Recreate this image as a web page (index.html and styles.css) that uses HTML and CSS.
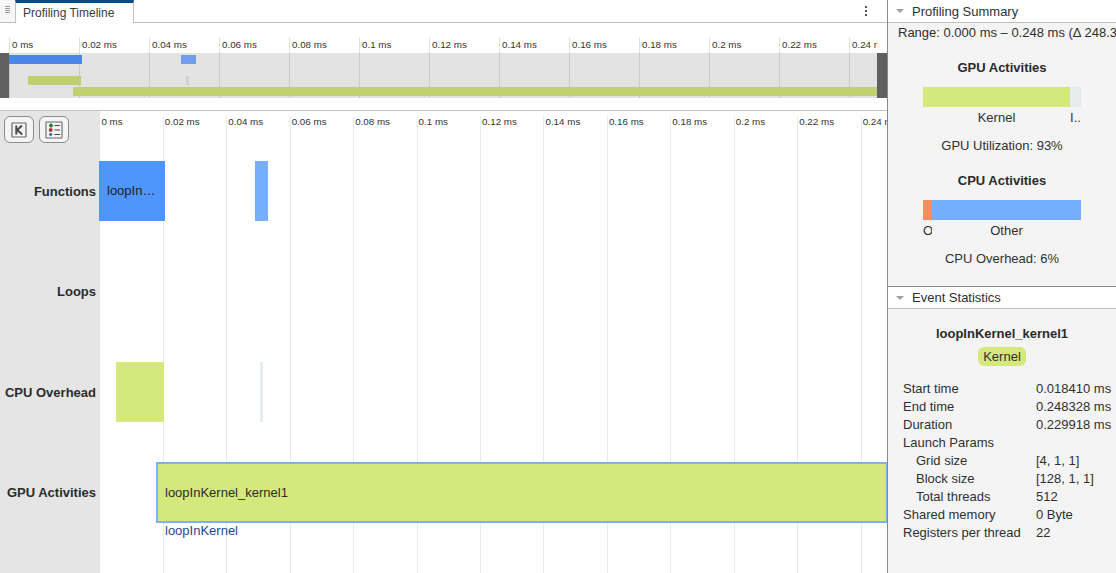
FILE: index.html
```html
<!DOCTYPE html>
<html lang="en">
<head>
<meta charset="utf-8">
<title>Profiling Timeline</title>
<link rel="stylesheet" href="styles.css">
</head>
<body>
<div class="app">
  <section class="left">
    <div class="tabbar">
      <div class="grip"><i></i><i></i><i></i><i></i></div>
      <div class="tab">Profiling Timeline</div>
      <div class="spacer"></div>
      <div class="kebab"><i></i><i></i><i></i></div>
    </div>
    <div class="overview">
      <div class="ov-ruler">
        <span class="ov-tick">0 ms</span><span class="ov-tick">0.02 ms</span><span class="ov-tick">0.04 ms</span><span class="ov-tick">0.06 ms</span><span class="ov-tick">0.08 ms</span><span class="ov-tick">0.1 ms</span><span class="ov-tick">0.12 ms</span><span class="ov-tick">0.14 ms</span><span class="ov-tick">0.16 ms</span><span class="ov-tick">0.18 ms</span><span class="ov-tick">0.2 ms</span><span class="ov-tick">0.22 ms</span><span class="ov-tick">0.24 ms</span>
      </div>
      <div class="ov-band">
        <div class="ov-lines"><i></i><i></i><i></i><i></i><i></i><i></i><i></i><i></i><i></i><i></i><i></i><i></i><i></i></div>
        <div class="ov-bar ov-f1"></div>
        <div class="ov-bar ov-f2"></div>
        <div class="ov-bar ov-c1"></div>
        <div class="ov-bar ov-c2"></div>
        <div class="ov-bar ov-g1"></div>
        <div class="handle handle-l"></div>
        <div class="handle handle-r"></div>
      </div>
    </div>
    <div class="main">
      <aside class="labels">
        <div class="tools">
          <button class="tool" type="button">
            <svg width="16" height="16" viewBox="0 0 16 16"><rect x="1" y="1" width="14" height="14" rx="0.5" fill="#f5f5f5" stroke="#666" stroke-width="1.2"/><path d="M5.3 3.5v9M11 3.5L6.2 8l5 4.5" fill="none" stroke="#4a4a4a" stroke-width="2"/></svg>
          </button>
          <button class="tool" type="button">
            <svg width="18" height="18" viewBox="0 0 18 18"><rect x="1" y="1" width="16" height="16" rx="0.5" fill="#f5f5f5" stroke="#666" stroke-width="1.1"/><path d="M4 4.5h4M6 2.5v4" stroke="#14802c" stroke-width="1.8"/><rect x="4" y="7.4" width="3.4" height="3.2" fill="#b02a2a"/><path d="M5.7 11.4l2 2-2 2-2-2z" fill="#2b6cc4"/><path d="M9.5 4.5h5.5M9.5 9h5.5M9.5 13.5h5.5" stroke="#444" stroke-width="1"/></svg>
          </button>
        </div>
        <div class="row-label lab-f">Functions</div>
        <div class="row-label lab-l">Loops</div>
        <div class="row-label lab-c">CPU Overhead</div>
        <div class="row-label lab-g">GPU Activities</div>
      </aside>
      <div class="canvas">
        <div class="m-cols">
          <span class="m-tick">0 ms</span><span class="m-tick">0.02 ms</span><span class="m-tick">0.04 ms</span><span class="m-tick">0.06 ms</span><span class="m-tick">0.08 ms</span><span class="m-tick">0.1 ms</span><span class="m-tick">0.12 ms</span><span class="m-tick">0.14 ms</span><span class="m-tick">0.16 ms</span><span class="m-tick">0.18 ms</span><span class="m-tick">0.2 ms</span><span class="m-tick">0.22 ms</span><span class="m-tick">0.24 ms</span>
        </div>
        <div class="bar bar-f1">loopIn…</div>
        <div class="bar bar-f2"></div>
        <div class="bar bar-c1"></div>
        <div class="bar bar-c2"></div>
        <div class="bar bar-g1">loopInKernel_kernel1</div>
        <div class="bar-sub">loopInKernel</div>
      </div>
    </div>
  </section>
  <section class="right">
    <header class="sec-head sec-first"><span class="tri"></span>Profiling Summary</header>
    <div class="summary">
      <div class="range">Range: 0.000 ms – 0.248 ms (Δ 248.328 µs)</div>
      <h3 class="chart-title gpu-title">GPU Activities</h3>
      <div class="stack"><span class="seg seg-kernel"></span><span class="seg seg-idle"></span></div>
      <div class="stack-labels"><span class="sl sl-kernel">Kernel</span><span class="sl sl-idle">I..</span></div>
      <div class="metric">GPU Utilization: 93%</div>
      <h3 class="chart-title cpu-title">CPU Activities</h3>
      <div class="stack"><span class="seg seg-over"></span><span class="seg seg-other"></span></div>
      <div class="stack-labels"><span class="sl sl-over">O</span><span class="sl sl-other">Other</span></div>
      <div class="metric">CPU Overhead: 6%</div>
    </div>
    <header class="sec-head sec-second"><span class="tri"></span>Event Statistics</header>
    <div class="stats">
      <div class="ev-name">loopInKernel_kernel1</div>
      <div class="pill-row"><span class="pill">Kernel</span></div>
      <dl class="kv">
        <dt>Start time</dt><dd>0.018410 ms</dd>
        <dt>End time</dt><dd>0.248328 ms</dd>
        <dt>Duration</dt><dd>0.229918 ms</dd>
        <dt>Launch Params</dt><dd></dd>
        <dt class="ind">Grid size</dt><dd>[4, 1, 1]</dd>
        <dt class="ind">Block size</dt><dd>[128, 1, 1]</dd>
        <dt class="ind">Total threads</dt><dd>512</dd>
        <dt>Shared memory</dt><dd>0 Byte</dd>
        <dt>Registers per thread</dt><dd>22</dd>
      </dl>
    </div>
  </section>
</div>
</body>
</html>
```
FILE: styles.css
```css
* { box-sizing: border-box; }
html, body { margin: 0; height: 100%; overflow: hidden; background: #fff; }
body { font-family: "Liberation Sans", Arial, sans-serif; color: #212121; font-size: 13px; }
.app { display: flex; width: 1116px; height: 573px; }

.left { width: 887px; display: flex; flex-direction: column; overflow: hidden; }
.right { width: 229px; border-left: 1px solid #8a8a8a; background: #f4f4f4; display: flex; flex-direction: column; overflow: hidden; }

.tabbar { height: 23px; display: flex; align-items: stretch; border-bottom: 1px solid #bfbfbf; }
.grip { width: 15px; display: flex; flex-direction: column; gap: 1px; padding: 6px 5px 0; background: #f7f7f7; border-bottom: 1px solid #bfbfbf; height: 23px; }
.grip i { display: block; height: 1px; background: #999; }
.tab { width: 119px; height: 23px; border-top: 3px solid #004b87; border-left: 1px solid #bfbfbf; border-right: 1px solid #bfbfbf; background: #fff; padding: 3px 0 0 7px; font-size: 12px; color: #3c3c3c; white-space: nowrap; }
.spacer { flex: 1; }
.kebab { width: 42px; display: flex; flex-direction: column; align-items: center; gap: 2px; padding: 6px 0 0 0; }
.kebab i { width: 2px; height: 2px; background: #555; }

.overview { height: 88px; border-bottom: 1px solid #c4c4c4; }
.ov-ruler { display: flex; width: 877px; padding: 14px 0 0 9px; height: 30px; overflow: hidden; }
.ov-tick { flex: 0 0 70px; height: 16px; padding: 0 0 0 2px; border-left: 1px solid #e2e2e2; font-size: 9.8px; line-height: 15px; color: #333; white-space: nowrap; }
.ov-band { position: relative; height: 45px; background: #e3e3e3; }
.ov-lines { display: flex; padding-left: 9px; height: 100%; }
.ov-lines i { flex: 0 0 70px; border-left: 1px solid #cdcdcd; }
.handle { position: absolute; top: 0; bottom: 0; background: #606060; }
.handle-l { left: 0; width: 9px; }
.handle-r { left: 877px; width: 10px; }
.ov-bar { position: absolute; }
.ov-f1 { left: 9px; top: 2px; width: 73px; height: 9px; background: #4a86e8; }
.ov-f2 { left: 181px; top: 2px; width: 15px; height: 9px; background: #6f9fe8; }
.ov-c1 { left: 28px; top: 23px; width: 53px; height: 9px; background: #c0d070; }
.ov-c2 { left: 186px; top: 23px; width: 3px; height: 9px; background: #cdd3d6; }
.ov-g1 { left: 73px; top: 34px; width: 804px; height: 9px; background: #c0d070; }

.main { flex: 1; display: flex; min-height: 0; }
.labels { width: 99px; background: #e5e5e5; position: relative; flex: none; }
.tools { display: flex; gap: 5px; padding: 5px 0 0 4px; }
.tool { width: 30px; height: 27px; padding: 0; display: flex; align-items: center; justify-content: center; background: #f4f4f4; border: 1px solid #8c8c8c; border-radius: 6px; }
.row-label { position: absolute; right: 3px; font-size: 13px; line-height: 16px; font-weight: bold; color: #2b2b2b; white-space: nowrap; }
.lab-f { top: 73px; }
.lab-l { top: 173px; }
.lab-c { top: 274px; }
.lab-g { top: 374px; }

.canvas { flex: 1; position: relative; overflow: hidden; background: linear-gradient(#e5e5e5, #e5e5e5) 0 0 / 1px 100% no-repeat, #fff; }
.m-cols { display: flex; height: 100%; padding: 5px 0 0 0.4px; }
.m-tick { flex: 0 0 63.45px; height: 100%; border-left: 1px solid #e8ebee; padding-left: 1px; font-size: 9.8px; line-height: 11px; color: #333; white-space: nowrap; }
.m-tick:first-child { border-left-color: transparent; }
.bar { position: absolute; }
.bar-f1 { left: 0; top: 50px; width: 66px; height: 60px; background: #4f95fe; padding-left: 8px; line-height: 59px; font-size: 13px; color: #212121; white-space: nowrap; }
.bar-f2 { left: 156px; top: 50px; width: 13px; height: 60px; background: #75aefb; }
.bar-c1 { left: 17px; top: 251px; width: 48px; height: 60px; background: #d5e87c; }
.bar-c2 { left: 161px; top: 251px; width: 3px; height: 60px; background: #e6ecef; }
.bar-g1 { left: 57px; top: 351px; width: 732px; height: 61px; background: #d5e87c; border: 2px solid #7db0f5; padding-left: 7px; line-height: 57px; font-size: 13px; color: #2b2b2b; white-space: nowrap; }
.bar-sub { position: absolute; left: 66px; top: 412px; font-size: 13px; line-height: 16px; color: #1c4a8c; white-space: nowrap; }

.sec-head { height: 23px; background: #fff; border-bottom: 1px solid #bfbfbf; display: flex; align-items: center; font-size: 13px; color: #303030; white-space: nowrap; flex: none; }
.sec-second { border-top: 1px solid #8a8a8a; }
.tri { width: 0; height: 0; margin: 0 8px 0 8px; border-left: 4px solid transparent; border-right: 4px solid transparent; border-top: 4px solid #a0a0a0; }

.summary { height: 263px; flex: none; }
.range { padding: 2px 0 0 10px; font-size: 13px; line-height: 16px; white-space: nowrap; color: #303030; }
.chart-title { margin: 0; text-align: center; font-size: 13px; line-height: 16px; font-weight: bold; color: #2b2b2b; }
.gpu-title { padding-top: 19px; }
.cpu-title { padding-top: 19px; }
.stack { display: flex; width: 158px; height: 20px; margin: 11px 0 0 35px; }
.seg { display: block; height: 100%; }
.seg-kernel { width: 147px; background: #d5e87c; }
.seg-idle { width: 11px; background: #e6ebee; }
.seg-over { width: 9px; background: #ff8a5c; }
.seg-other { width: 149px; background: #75aefb; }
.stack-labels { display: flex; width: 158px; margin: 3px 0 0 35px; font-size: 13px; line-height: 16px; color: #303030; }
.sl { display: block; text-align: center; overflow: hidden; white-space: nowrap; }
.sl-kernel { width: 147px; }
.sl-idle { width: 11px; }
.sl-over { width: 9px; }
.sl-other { width: 149px; }
.metric { text-align: center; font-size: 13px; line-height: 16px; margin-top: 12px; color: #303030; }

.stats { flex: 1; padding-top: 17px; }
.ev-name { text-align: center; font-weight: bold; font-size: 13px; line-height: 16px; color: #2b2b2b; }
.pill-row { display: flex; justify-content: center; margin-top: 5px; }
.pill { height: 19px; line-height: 19px; padding: 0 5px; background: #d5e87c; border-radius: 6px; font-size: 13px; color: #303030; }
.kv { display: grid; grid-template-columns: 133px 1fr; grid-auto-rows: 18px; margin: 14px 0 0; padding-left: 15px; font-size: 13px; line-height: 18px; color: #303030; }
.kv dt, .kv dd { margin: 0; white-space: nowrap; }
.kv .ind { padding-left: 13px; }
```
